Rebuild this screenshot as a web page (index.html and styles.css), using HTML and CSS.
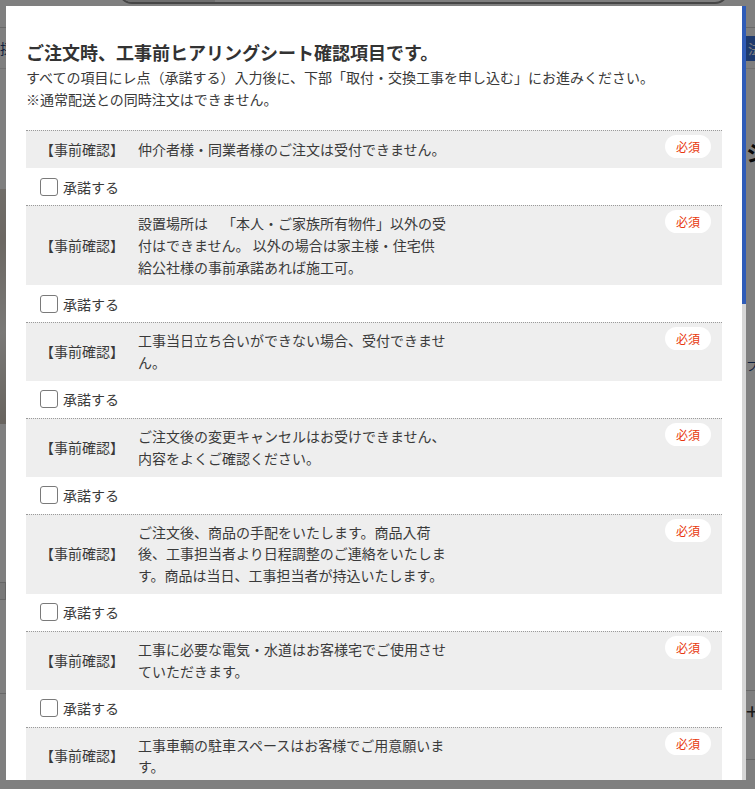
FILE: index.html
```html
<!DOCTYPE html>
<html lang="ja">
<head>
<meta charset="utf-8">
<title>工事前ヒアリングシート</title>
<link rel="stylesheet" href="styles.css">
</head>
<body>
<div class="site">
  <header class="site-header">
    <div class="search"><div class="search-cat"></div><div class="search-field"></div></div>
  </header>
  <nav class="nav">
    <span class="nav-link">採用情報</span>
    <span class="nav-btn">法人のお客様</span>
  </nav>
  <section class="hero">
    <div class="hero-img"></div>
    <div class="hero-side">
      <h1 class="hero-title">シャワー</h1>
      <p class="hero-note">フリーダイヤル</p>
    </div>
  </section>
  <section class="lower">
    <div class="lower-left"><div class="lower-box"></div></div>
    <div class="lower-right"><span class="plus">+</span></div>
  </section>
</div>

<div class="overlay"></div>

<div class="modal" role="dialog">
  <div class="modal-body">
    <h2 class="modal-title">ご注文時、工事前ヒアリングシート確認項目です。</h2>
    <p class="modal-lead">すべての項目にレ点（承諾する）入力後に、下部「取付・交換工事を申し込む」にお進みください。<br>※通常配送との同時注文はできません。</p>

    <div class="checklist">
      <div class="item">
        <div class="q-row">
          <div class="q-head">【事前確認】</div>
          <div class="q-text">仲介者様・同業者様のご注文は受付できません。</div>
          <div class="q-req"><span class="badge">必須</span></div>
        </div>
        <label class="agree"><input type="checkbox" class="check"><span>承諾する</span></label>
      </div>

      <div class="item">
        <div class="q-row">
          <div class="q-head">【事前確認】</div>
          <div class="q-text">設置場所は　「本人・ご家族所有物件」以外の受付はできません。 以外の場合は家主様・住宅供給公社様の事前承諾あれば施工可。</div>
          <div class="q-req"><span class="badge">必須</span></div>
        </div>
        <label class="agree"><input type="checkbox" class="check"><span>承諾する</span></label>
      </div>

      <div class="item">
        <div class="q-row">
          <div class="q-head">【事前確認】</div>
          <div class="q-text">工事当日立ち合いができない場合、受付できません。</div>
          <div class="q-req"><span class="badge">必須</span></div>
        </div>
        <label class="agree"><input type="checkbox" class="check"><span>承諾する</span></label>
      </div>

      <div class="item">
        <div class="q-row">
          <div class="q-head">【事前確認】</div>
          <div class="q-text">ご注文後の変更キャンセルはお受けできません、内容をよくご確認ください。</div>
          <div class="q-req"><span class="badge">必須</span></div>
        </div>
        <label class="agree"><input type="checkbox" class="check"><span>承諾する</span></label>
      </div>

      <div class="item">
        <div class="q-row">
          <div class="q-head">【事前確認】</div>
          <div class="q-text">ご注文後、商品の手配をいたします。商品入荷後、工事担当者より日程調整のご連絡をいたします。商品は当日、工事担当者が持込いたします。</div>
          <div class="q-req"><span class="badge">必須</span></div>
        </div>
        <label class="agree"><input type="checkbox" class="check"><span>承諾する</span></label>
      </div>

      <div class="item">
        <div class="q-row">
          <div class="q-head">【事前確認】</div>
          <div class="q-text">工事に必要な電気・水道はお客様宅でご使用させていただきます。</div>
          <div class="q-req"><span class="badge">必須</span></div>
        </div>
        <label class="agree"><input type="checkbox" class="check"><span>承諾する</span></label>
      </div>

      <div class="item">
        <div class="q-row">
          <div class="q-head">【事前確認】</div>
          <div class="q-text">工事車輌の駐車スペースはお客様でご用意願います。</div>
          <div class="q-req"><span class="badge">必須</span></div>
        </div>
        <label class="agree"><input type="checkbox" class="check"><span>承諾する</span></label>
      </div>
    </div>
  </div>
  <div class="scrollbar"><div class="scroll-thumb"></div></div>
</div>
</body>
</html>
```

FILE: styles.css
```css
* { box-sizing: border-box; }

html, body {
  margin: 0;
  padding: 0;
}

body {
  width: 755px;
  height: 789px;
  overflow: hidden;
  background: #fff;
  color: #333;
  font-family: "Noto Sans CJK JP", "Noto Sans", "Liberation Sans", sans-serif;
}

/* ---------- page underneath the dialog ---------- */
.site {
  width: 755px;
}

.site-header {
  height: 28px;
  border-bottom: 1px solid #d2d2d2;
  display: flex;
}

.search {
  margin: -26px 0 0 118px;
  width: 611px;
  height: 30px;
  border: 2px solid #8c8c8c;
  border-radius: 0 0 14px 14px;
  display: flex;
  overflow: hidden;
  background: #fff;
}

.search-cat {
  width: 95px;
  background: #dedede;
}

.search-field {
  flex: 1;
}

.nav {
  height: 41px;
  display: flex;
  justify-content: space-between;
  align-items: center;
  border-bottom: 1px solid #e4e4e4;
}

.nav-link {
  font-size: 14px;
  color: #1d3f7a;
  white-space: nowrap;
}

.nav-btn {
  width: 110px;
  margin-right: -101px;
  height: 25px;
  line-height: 25px;
  padding-left: 2px;
  font-size: 13px;
  color: #fff;
  background: #3c74dc;
  white-space: nowrap;
}

.hero {
  display: flex;
  justify-content: space-between;
  padding-top: 66px;
}

.hero-img {
  width: 200px;
  height: 235px;
  margin-left: -194px;
  margin-top: 54px;
  background: linear-gradient(160deg, #efeae4 0%, #d8d0c6 40%, #f4f2ee 70%, #cfc7bc 100%);
}

.hero-side {
  width: 200px;
  margin-right: -191px;
}

.hero-title {
  margin: 0;
  font-size: 22px;
  font-weight: bold;
  color: #111;
  white-space: nowrap;
}

.hero-note {
  margin: 190px 0 0;
  font-size: 12px;
  color: #1d3f7a;
  white-space: nowrap;
}

.lower {
  display: flex;
  justify-content: space-between;
  margin-top: 150px;
}

.lower-left {
  width: 200px;
  margin-left: -194px;
  border-bottom: 1px solid #d0d0d0;
  height: 120px;
}

.lower-box {
  height: 18px;
  margin-top: 8px;
  border: 1px solid #cfcfcf;
  background: #f2f2f2;
}

.lower-right {
  width: 200px;
  margin-right: -191px;
  margin-top: 116px;
  border-top: 1px solid #d0d0d0;
  border-bottom: 1px solid #d0d0d0;
  height: 70px;
  padding-top: 8px;
}

.plus {
  font-size: 22px;
  line-height: 22px;
  color: #333;
}

/* ---------- overlay + dialog ---------- */
.overlay {
  position: fixed;
  inset: 0;
  background: rgba(0, 0, 0, 0.5);
}

.modal {
  position: fixed;
  top: 6px;
  left: 6px;
  width: 740px;
  height: 774px;
  background: #fff;
  overflow: hidden;
}

.modal-body {
  padding: 33px 24px 0 20px;
}

.modal-title {
  margin: 0;
  font-size: 18px;
  line-height: 27px;
  font-weight: bold;
  color: #333;
}

.modal-lead {
  margin: 0;
  font-size: 14px;
  line-height: 22px;
  color: #3a3a3a;
}

.checklist {
  margin-top: 20px;
}

.q-row {
  display: grid;
  grid-template-columns: 112px 310px 1fr;
  background: #eee;
  border-top: 1px dotted #9a9a9a;
  font-size: 14px;
  color: #3a3a3a;
  text-spacing-trim: space-all;
}

.q-head {
  align-self: center;
  text-align: center;
  line-height: 21.8px;
  font-weight: normal;
  white-space: nowrap;
}

.q-text {
  align-self: center;
  padding: 7px 0;
  line-height: 21.8px;
}

.q-req {
  align-self: start;
  justify-self: end;
  padding: 4px 11px 10px 0;
}

.badge {
  display: block;
  width: 46px;
  height: 23px;
  line-height: 23px;
  border-radius: 12px;
  background: #fff;
  color: #e8380d;
  font-size: 12px;
  text-align: center;
}

.agree {
  height: 37px;
  display: flex;
  align-items: center;
  gap: 5px;
  padding-left: 14px;
  font-size: 14px;
  color: #3a3a3a;
}

.check {
  appearance: none;
  -webkit-appearance: none;
  width: 18px;
  height: 18px;
  margin: 0;
  border: 1px solid #7a7a7a;
  border-radius: 3px;
  background: #fff;
}

/* custom scrollbar drawn over the dialog edge */
.scrollbar {
  position: absolute;
  top: 0;
  right: 0;
  width: 4px;
  height: 100%;
  background: #d6d6d6;
}

.scroll-thumb {
  height: 298px;
  background: #2f5cb8;
}
```
